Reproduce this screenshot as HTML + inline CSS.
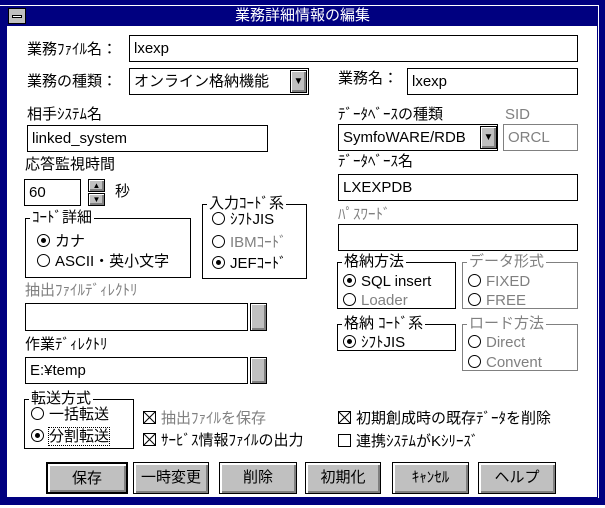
<!DOCTYPE html>
<html><head><meta charset="utf-8"><style>
*{margin:0;padding:0;box-sizing:border-box}
body{width:605px;height:508px;background:#fff;position:relative;overflow:hidden;font-family:"Liberation Sans","Noto Sans CJK JP","WenQuanYi Zen Hei",sans-serif;font-size:15px;color:#000}
.a{position:absolute;line-height:16px;white-space:nowrap;margin-top:2px}
.g{color:#808080}
.frame{position:absolute;left:0;top:0;width:605px;height:505px;background:#000080}
.panel{position:absolute;left:7px;top:26px;width:590px;height:471px;background:#fff}
.in{position:absolute;border:1px solid #000;background:#fff;padding-left:4px;line-height:25px;font-size:15px}
.in.gb{border-color:#808080;color:#808080}
.btn{position:absolute;background:#c0c0c0;border:1px solid #000;box-shadow:inset 1px 1px 0 #fff,inset -2px -2px 0 #808080}
.grp{position:absolute;border:1px solid #000}
.grp.gr{border-color:#808080}
.grp>span{position:absolute;top:-9px;left:4px;background:#fff;padding:0 2px;line-height:16px}
.r{display:inline-block;width:13px;height:13px;border:1px solid #000;border-radius:50%;vertical-align:-1px;margin-right:5px;position:relative;background:#fff}
.r.on::after{content:"";position:absolute;left:3px;top:3px;width:5px;height:5px;border-radius:50%;background:#000}
.cb{display:inline-block;width:13px;height:13px;border:1px solid #000;vertical-align:-1px;margin-right:5px;position:relative;background:#fff;overflow:hidden}
.cb.x::before,.cb.x::after{content:"";position:absolute;left:-3px;top:5px;width:17px;height:1px;background:#000;transform:rotate(45deg)}
.cb.x::after{transform:rotate(-45deg)}
.pb{position:absolute;top:462px;height:32px;background:#c0c0c0;border:1px solid #000;box-shadow:inset 1px 1px 0 #fff,inset 2px 2px 0 #fff,inset -1px -1px 0 #808080,inset -2px -2px 0 #808080;text-align:center;line-height:30px;font-size:15px}
.arrow{font-size:10px;text-align:center;line-height:22px}
</style></head><body>
<div class="frame"></div>
<div style="position:absolute;left:0;top:5px;width:598px;height:1px;background:#fff"></div>
<div style="position:absolute;left:598px;top:5px;width:1px;height:493px;background:#fff"></div>
<div style="position:absolute;left:8px;top:8px;width:18px;height:16px;background:#c0c0c0;border:1px solid #000"><div style="position:absolute;left:3px;top:6px;width:10px;height:3px;background:#fff;border:1px solid #000"></div></div>
<div class="a" style="left:0;width:605px;top:6px;text-align:center;color:#fff;font-size:15px">業務詳細情報の編集</div>
<div class="panel"></div>

<div class="a" style="left:27px;top:40px">業務ﾌｧｲﾙ名：</div>
<div class="in" style="left:129px;top:35px;width:449px;height:27px">lxexp</div>
<div class="a" style="left:27px;top:72px">業務の種類：</div>
<div class="in" style="left:129px;top:68px;width:180px;height:27px">オンライン格納機能</div>
<div class="btn arrow" style="left:290px;top:70px;width:17px;height:23px">&#9660;</div>
<div class="a" style="left:338px;top:69px">業務名：</div>
<div class="in" style="left:407px;top:68px;width:171px;height:27px">lxexp</div>

<div class="a" style="left:27px;top:105px">相手ｼｽﾃﾑ名</div>
<div class="in" style="left:27px;top:125px;width:241px;height:27px">linked_system</div>
<div class="a" style="left:25px;top:155px">応答監視時間</div>
<div class="in" style="left:24px;top:179px;width:57px;height:27px">60</div>
<div class="btn" style="left:88px;top:179px;width:17px;height:13px;font-size:8px;text-align:center;line-height:11px">&#9650;</div>
<div class="btn" style="left:88px;top:193px;width:17px;height:13px;font-size:8px;text-align:center;line-height:11px">&#9660;</div>
<div class="a" style="left:115px;top:182px">秒</div>

<div class="grp" style="left:25px;top:218px;width:166px;height:60px"><span>ｺｰﾄﾞ詳細</span></div>
<div class="a" style="left:37px;top:232px"><i class="r on"></i>カナ</div>
<div class="a" style="left:37px;top:252px"><i class="r"></i>ASCII・英小文字</div>
<div class="grp" style="left:202px;top:204px;width:105px;height:75px"><span>入力ｺｰﾄﾞ系</span></div>
<div class="a" style="left:212px;top:210px"><i class="r"></i>ｼﾌﾄJIS</div>
<div class="a g" style="left:212px;top:233px"><i class="r"></i>IBMｺｰﾄﾞ</div>
<div class="a" style="left:212px;top:254px"><i class="r on"></i>JEFｺｰﾄﾞ</div>

<div class="a g" style="left:25px;top:281px">抽出ﾌｧｲﾙﾃﾞｨﾚｸﾄﾘ</div>
<div class="in" style="left:25px;top:303px;width:223px;height:28px"></div>
<div class="btn" style="left:250px;top:303px;width:17px;height:28px"></div>
<div class="a" style="left:25px;top:335px">作業ﾃﾞｨﾚｸﾄﾘ</div>
<div class="in" style="left:25px;top:357px;width:223px;height:27px">E:¥temp</div>
<div class="btn" style="left:250px;top:357px;width:17px;height:27px"></div>

<div class="grp" style="left:24px;top:399px;width:110px;height:50px"><span>転送方式</span></div>
<div class="a" style="left:31px;top:405px"><i class="r"></i>一括転送</div>
<div class="a" style="left:31px;top:427px"><i class="r on"></i><span style="outline:1px dotted #000">分割転送</span></div>
<div class="a g" style="left:143px;top:409px"><i class="cb x"></i>抽出ﾌｧｲﾙを保存</div>
<div class="a" style="left:143px;top:431px"><i class="cb x"></i>ｻｰﾋﾞｽ情報ﾌｧｲﾙの出力</div>
<div class="a" style="left:338px;top:409px"><i class="cb x"></i>初期創成時の既存ﾃﾞｰﾀを削除</div>
<div class="a" style="left:338px;top:432px"><i class="cb"></i>連携ｼｽﾃﾑがKｼﾘｰｽﾞ</div>

<div class="a" style="left:338px;top:105px">ﾃﾞｰﾀﾍﾞｰｽの種類</div>
<div class="a g" style="left:505px;top:105px">SID</div>
<div class="in" style="left:338px;top:124px;width:160px;height:27px">SymfoWARE/RDB</div>
<div class="btn arrow" style="left:480px;top:126px;width:17px;height:23px">&#9660;</div>
<div class="in gb" style="left:503px;top:124px;width:75px;height:27px">ORCL</div>
<div class="a" style="left:338px;top:152px">ﾃﾞｰﾀﾍﾞｰｽ名</div>
<div class="in" style="left:338px;top:174px;width:240px;height:27px">LXEXPDB</div>
<div class="a g" style="left:338px;top:205px">ﾊﾟｽﾜｰﾄﾞ</div>
<div class="in" style="left:338px;top:224px;width:240px;height:27px"></div>

<div class="grp" style="left:337px;top:262px;width:119px;height:47px"><span>格納方法</span></div>
<div class="a" style="left:343px;top:272px"><i class="r on"></i>SQL insert</div>
<div class="a g" style="left:343px;top:291px"><i class="r"></i>Loader</div>
<div class="grp gr" style="left:462px;top:262px;width:116px;height:47px"><span class="g">データ形式</span></div>
<div class="a g" style="left:468px;top:272px"><i class="r"></i>FIXED</div>
<div class="a g" style="left:468px;top:291px"><i class="r"></i>FREE</div>
<div class="grp" style="left:337px;top:324px;width:119px;height:27px"><span>格納 ｺｰﾄﾞ系</span></div>
<div class="a" style="left:343px;top:333px"><i class="r on"></i>ｼﾌﾄJIS</div>
<div class="grp gr" style="left:462px;top:324px;width:116px;height:47px"><span class="g">ロード方法</span></div>
<div class="a g" style="left:468px;top:333px"><i class="r"></i>Direct</div>
<div class="a g" style="left:468px;top:353px"><i class="r"></i>Convent</div>

<div class="pb" style="left:46px;width:82px;border:2px solid #000">保存</div>
<div class="pb" style="left:133px;width:76px">一時変更</div>
<div class="pb" style="left:219px;width:78px">削除</div>
<div class="pb" style="left:305px;width:76px">初期化</div>
<div class="pb" style="left:392px;width:77px">ｷｬﾝｾﾙ</div>
<div class="pb" style="left:478px;width:78px">ヘルプ</div>
</body></html>
